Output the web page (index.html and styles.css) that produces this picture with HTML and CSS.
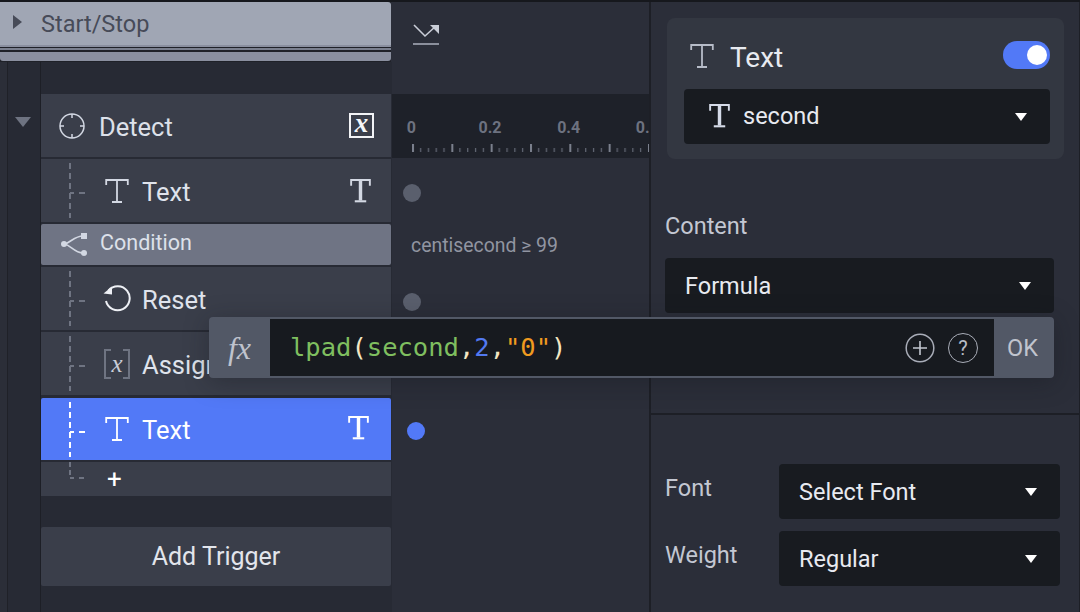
FILE: index.html
```html
<!DOCTYPE html>
<html lang="en">
<head>
<meta charset="utf-8">
<title>Trigger editor</title>
<link rel="stylesheet" href="styles.css">
</head>
<body>
<svg class="defs" width="0" height="0" aria-hidden="true">
  <symbol id="t-icon" viewBox="0 0 24 26">
    <path d="M1.2 7V2h21.6v5M12 2v22M7 24h10" fill="none" stroke="currentColor" stroke-width="1.8"/>
  </symbol>
  <symbol id="t-bold" viewBox="0 0 22 25">
    <path d="M1.2 7.5V1.5h19.6v6" fill="none" stroke="currentColor" stroke-width="2"/>
    <path d="M11 2v21" fill="none" stroke="currentColor" stroke-width="3.6"/>
    <path d="M5 23.8h12" fill="none" stroke="currentColor" stroke-width="2.2"/>
  </symbol>
  <symbol id="conn" viewBox="0 0 24 63">
    <path d="M4 4V59" stroke="currentColor" stroke-width="2" stroke-dasharray="6 4" fill="none"/>
    <path d="M4 34H8M13 34H19" stroke="currentColor" stroke-width="2" fill="none"/>
  </symbol>
</svg>
<div class="app">
  <section class="editor">
    <div class="tree-col">
      <div class="stack">
        <div class="stack-head">
          <span class="tri-right"></span>
          <span>Start/Stop</span>
        </div>
        <div class="stack-edge"></div>
        <div class="stack-thin"></div>
        <div class="stack-sheet"></div>
      </div>
      <div class="tree-body">
        <div class="rail"><span class="tri-down"></span></div>
        <div class="rows">
          <div class="row row-head">
            <svg class="ic-detect" width="26" height="26" viewBox="0 0 26 26"><g fill="none" stroke="#d3d8e3" stroke-width="1.5"><circle cx="13" cy="13" r="12"/><path d="M13 1v4M13 21v4M1 13h4M21 13h4"/></g></svg>
            <span class="row-title">Detect</span>
            <span class="var-box">x</span>
          </div>
          <div class="row">
            <svg class="conn"><use href="#conn"/></svg>
            <svg class="ic-main"><use href="#t-icon"/></svg>
            <span class="label">Text</span>
            <svg class="ic-end"><use href="#t-bold"/></svg>
          </div>
          <div class="row-cond">
            <svg class="ic-cond" width="28" height="24" viewBox="0 0 28 24"><g fill="#d3d8e3"><circle cx="4" cy="12" r="3"/><rect x="21" y="1" width="6" height="6"/><circle cx="24" cy="21" r="3"/></g><path d="M5 12C11 10 15 4 23 4M5 12C11 14 15 21 23 21" fill="none" stroke="#d3d8e3" stroke-width="1.6"/></svg>
            <span class="cond-label">Condition</span>
          </div>
          <div class="row">
            <svg class="conn"><use href="#conn"/></svg>
            <svg class="ic-reset" width="28" height="28" viewBox="0 0 28 28"><path d="M5.5 6.5A12 12 0 1 1 3 17" fill="none" stroke="#eef0f5" stroke-width="2"/><path d="M0.5 9.5L9 2.5V10.5Z" fill="#eef0f5"/></svg>
            <span class="label">Reset</span>
          </div>
          <div class="row">
            <svg class="conn"><use href="#conn"/></svg>
            <span class="ic-assign">x</span>
            <span class="label">Assign</span>
          </div>
          <div class="row row-active">
            <svg class="conn"><use href="#conn"/></svg>
            <svg class="ic-main"><use href="#t-icon"/></svg>
            <span class="label">Text</span>
            <svg class="ic-end"><use href="#t-bold"/></svg>
          </div>
          <div class="row-add">
            <svg class="conn-end" width="24" height="20" viewBox="0 0 24 20"><path d="M4 0V16H8M13 16H19" fill="none" stroke="#6f7482" stroke-width="2" stroke-dasharray="5 3"/></svg>
            <span class="plus">+</span>
          </div>
          <div class="add-trigger">Add Trigger</div>
        </div>
      </div>
    </div>
    <div class="time-col">
      <div class="time-top">
        <svg width="28" height="22" viewBox="0 0 28 22"><path d="M2 2L13 13L24 3" fill="none" stroke="#c9cdd7" stroke-width="1.6"/><path d="M18 2H27V11Z" fill="#c9cdd7"/><path d="M1 21H27" stroke="#8b8f9c" stroke-width="2"/></svg>
      </div>
      <div class="ruler">
        <div class="ruler-labels"><span>0</span><span>0.2</span><span>0.4</span><span>0.6</span></div>
        <svg class="ruler-ticks" width="258" height="9">
          <defs><pattern id="ticks" width="39.33" height="9" patternUnits="userSpaceOnUse"><rect x="0" y="0" width="2" height="8" fill="#7b808d"/><rect x="8" y="4" width="1.2" height="4" fill="#636875"/><rect x="15.8" y="4" width="1.2" height="4" fill="#636875"/><rect x="23.6" y="4" width="1.2" height="4" fill="#636875"/><rect x="31.4" y="4" width="1.2" height="4" fill="#636875"/></pattern></defs>
          <rect x="0" y="0" width="258" height="9" fill="url(#ticks)"/>
        </svg>
      </div>
      <div class="lane lane-a"><span class="dot"></span></div>
      <div class="lane-cond">centisecond ≥ 99</div>
      <div class="lane lane-b"><span class="dot"></span></div>
      <div class="lane lane-c"></div>
      <div class="lane lane-d"><span class="dot dot-blue"></span></div>
    </div>
  </section>

  <aside class="panel">
    <div class="card">
      <div class="card-head">
        <svg class="ic-card"><use href="#t-icon"/></svg>
        <span class="card-title">Text</span>
        <span class="toggle"><span class="knob"></span></span>
      </div>
      <div class="select select-card">
        <svg class="ic-select"><use href="#t-bold"/></svg>
        <span class="select-text">second</span>
        <span class="caret"></span>
      </div>
    </div>
    <div class="field-label">Content</div>
    <div class="select select-content">
      <span class="select-text">Formula</span>
      <span class="caret"></span>
    </div>
    <div class="divider"></div>
    <div class="form-row form-row-first">
      <span class="form-label">Font</span>
      <div class="select select-form"><span class="select-text">Select Font</span><span class="caret"></span></div>
    </div>
    <div class="form-row">
      <span class="form-label">Weight</span>
      <div class="select select-form"><span class="select-text">Regular</span><span class="caret"></span></div>
    </div>
  </aside>

  <div class="formula">
    <span class="fx">fx</span>
    <div class="code-wrap">
      <code class="code"><span class="c-fn">lpad</span><span class="c-p">(</span><span class="c-fn">second</span><span class="c-p">,</span><span class="c-num">2</span><span class="c-p">,</span><span class="c-str">"0"</span><span class="c-p">)</span></code>
      <svg class="round-btn" width="30" height="30" viewBox="0 0 30 30"><circle cx="15" cy="15" r="13.8" fill="none" stroke="#a9adb8" stroke-width="1.5"/><path d="M15 8v14M8 15h14" stroke="#c2c6cf" stroke-width="1.6"/></svg>
      <span class="help">?</span>
    </div>
    <span class="ok">OK</span>
  </div>
</div>
</body>
</html>
```

FILE: styles.css
```css
* { box-sizing: border-box; }
html, body { margin: 0; padding: 0; height: 100%; overflow: hidden; background: #2b2e39; }
body { font-family: Roboto, "Liberation Sans", sans-serif; color: #e4e7ee; }
.defs { position: absolute; }

.app { position: relative; display: flex; width: 1080px; height: 612px; border-top: 2px solid #16181d; background: #2b2e39; overflow: hidden; }

/* left editor */
.editor { display: flex; width: 651px; flex: none; border-right: 2px solid #1d1f26; }
.tree-col { width: 392px; flex: none; display: flex; flex-direction: column; }
.stack { height: 60px; flex: none; background: #1f2128; display: flex; flex-direction: column; margin-right: 1px; }
.stack-head { height: 43px; flex: none; background: #a0a6b4; border-radius: 0 3px 0 0; display: flex; align-items: center; color: #474b58; font-size: 23.5px; padding-left: 13px; }
.tri-right { width: 0; height: 0; border-left: 9px solid #474b58; border-top: 7px solid transparent; border-bottom: 7px solid transparent; margin-right: 19px; margin-top: -4px; }
.stack-edge { height: 2px; flex: none; background: #8a8f9f; }
.stack-thin { height: 2px; flex: none; margin-top: 1px; background: #7a7f8e; }
.stack-sheet { height: 9px; flex: none; margin-top: 2px; background: #8a8f9f; border-radius: 0 0 3px 3px; }

.tree-body { flex: 1; display: flex; min-height: 0; background: #272a34; }
.rail { width: 41px; flex: none; background: linear-gradient(90deg, #2b2e38 0 7px, #1f2128 7px 8px, #272a34 8px 39.5px, #1d1f26 39.5px 41px); padding: 55px 0 0 15px; }
.tri-down { display: block; width: 0; height: 0; border-top: 10px solid #6e7381; border-left: 8px solid transparent; border-right: 8px solid transparent; }
.rows { flex: 1; padding: 32px 0 0; margin-right: 1px; display: flex; flex-direction: column; min-width: 0; }

.row { height: 63px; flex: none; margin-bottom: 2px; background: #3a3e4a; display: flex; align-items: center; padding-left: 25px; color: #6f7482; }
.row-head { margin-bottom: 2px; padding-left: 18px; }
.row-title { font-size: 25.5px; color: #dde1ea; margin-left: 14px; margin-top: 2px; }
.var-box { width: 25px; height: 25px; border: 2px solid #f2f3f6; margin-left: auto; margin-right: 17px; display: flex; align-items: center; justify-content: center; font: italic bold 27px/1 "Liberation Serif", serif; color: #f5f6f8; padding-bottom: 5px; }
.conn { width: 24px; height: 63px; flex: none; color: #6f7482; }
.ic-main { width: 24px; height: 26px; margin-left: 15px; color: #d3d8e3; flex: none; }
.label { font-size: 25.5px; color: #dfe3ec; margin-left: 13px; margin-top: 2px; }
.ic-end { width: 21px; height: 25px; margin-left: auto; margin-right: 20px; color: #d3d8e3; flex: none; }
.ic-reset { margin-left: 13px; margin-right: -2px; margin-top: -2px; flex: none; }
.ic-assign { width: 26px; height: 26px; margin-left: 14px; margin-right: -1px; flex: none; display: flex; align-items: center; justify-content: space-between; font: italic 25px/26px "Liberation Serif", serif; color: #c8ccd6; }
.ic-assign::before, .ic-assign::after { content: ""; width: 6px; height: 26px; border: 2px solid #6f7482; }
.ic-assign::before { border-right: 0; }
.ic-assign::after { border-left: 0; }
.row-cond { height: 41px; flex: none; margin-bottom: 2px; background: #6f7484; border-radius: 2px; display: flex; align-items: center; padding-left: 19px; }
.cond-label { font-size: 21.5px; color: #dde1ea; margin-left: 12px; margin-top: -4px; }
.ic-cond { margin-top: -2px; flex: none; }
.row-active { height: 62px; background: #5279f7; margin-top: 1px; color: #f5f6fa; margin-bottom: 2px; border-radius: 2px 2px 0 0; }
.row-active .conn, .row-active .ic-main, .row-active .ic-end, .row-active .label { color: #fff; }
.row-active .ic-end { margin-right: 22px; margin-top: -4px; }
.row-add { height: 34px; flex: none; background: #3a3e4a; display: flex; padding-left: 25px; align-items: flex-start; }
.conn-end { flex: none; }
.plus { font-size: 26px; line-height: 34px; color: #fff; margin-left: 17px; }
.add-trigger { height: 59px; flex: none; margin-top: 31px; background: #3a3e4a; border-radius: 2px; display: flex; align-items: center; justify-content: center; font-size: 25px; color: #e2e5ec; }

/* timeline */
.time-col { flex: 1; min-width: 0; display: flex; flex-direction: column; overflow: hidden; }
.time-top { height: 92px; flex: none; padding: 21px 0 0 20px; }
.ruler { height: 64px; flex: none; background: #1e2129; padding-top: 20px; overflow: hidden; }
.ruler-labels { display: flex; margin-left: -20px; font-size: 16px; font-weight: 700; color: #6d7280; height: 30px; line-height: 28px; }
.ruler-labels span { width: 78.66px; flex: none; text-align: center; }
.ruler-ticks { display: block; margin-left: 20px; margin-top: 0; }
.lane { flex: none; display: flex; align-items: center; padding-left: 11px; padding-bottom: 2px; }
.lane-a { height: 72px; }
.lane-b { height: 62px; }
.lane-c { height: 64px; }
.lane-d { height: 68px; }
.dot { width: 18px; height: 18px; border-radius: 50%; background: #5a5f6d; }
.dot-blue { background: #5279f7; margin-left: 4px; }
.lane-cond { height: 42px; flex: none; padding-left: 19px; font-size: 19.4px; line-height: 32px; color: #9195a1; }

/* right panel */
.panel { flex: 1; min-width: 0; padding: 16px 0 0 14px; border-right: 1px solid #1d1f26; position: relative; }
.card { width: 397px; height: 141px; margin-left: 2px; background: #333741; border-radius: 8px; padding: 24px 14px 0 17px; }
.card-head { display: flex; align-items: center; height: 30px; padding-left: 6px; }
.ic-card { width: 24px; height: 26px; color: #b7bcc8; flex: none; margin-top: -2px; }
.card-title { font-size: 28px; margin-left: 16px; color: #e8eaf0; margin-top: 1px; }
.toggle { margin-left: auto; width: 47px; height: 28px; margin-top: -4px; border-radius: 14px; background: #5279f7; display: flex; align-items: center; justify-content: flex-end; padding-right: 3px; }
.knob { width: 20px; height: 20px; border-radius: 50%; background: #fff; }
.select { background: #181b20; border-radius: 4px; display: flex; align-items: center; padding-left: 20px; padding-right: 23px; }
.select-card { height: 55px; margin-top: 17px; }
.ic-select { width: 21px; height: 25px; color: #d5dbe8; margin-left: 5px; flex: none; margin-right: 13px; margin-bottom: 2px; }
.select-card .select-text { margin-bottom: 2px; }
.select-text { font-size: 23.5px; color: #e8eaf0; }
.caret { margin-left: auto; width: 0; height: 0; border-top: 8px solid #fff; border-left: 6px solid transparent; border-right: 6px solid transparent; }
.field-label { font-size: 23.5px; color: #c3c7d2; margin-top: 52px; height: 47px; line-height: 30px; }
.select-content { width: 389px; height: 55px; }
.divider { margin: 100px 0 0 -14px; height: 2px; background: #1d1f26; width: 430px; }
.form-row { display: flex; align-items: center; margin-top: 12px; width: 395px; }
.form-row-first { margin-top: 49px; }
.form-label { width: 114px; flex: none; font-size: 23.5px; color: #c3c7d2; margin-top: -7px; }
.select-form { flex: 1; height: 55px; }

/* formula overlay */
.formula { position: absolute; left: 209px; top: 315px; width: 845px; height: 61px; background: #525866; border-radius: 4px; display: flex; box-shadow: 0 4px 24px rgba(20,22,28,.35); }
.fx { width: 61px; flex: none; display: flex; align-items: center; justify-content: center; font: italic 32px/1 "Liberation Serif", serif; color: #bfc3cd; }
.code-wrap { flex: 1; min-width: 0; margin: 2px 0; background: #171a1f; display: flex; align-items: center; padding: 0 16px 0 20px; }
.code { font: 25.5px/1 "DejaVu Sans Mono", monospace; }
.c-fn { color: #7fbf5f; }
.c-p { color: #f3e6c3; }
.c-num { color: #5279f0; }
.c-str { color: #f09a1f; }
.round-btn { margin-left: auto; flex: none; }
.help { width: 30px; height: 30px; margin-left: 13px; border: 1.5px solid #a9adb8; border-radius: 50%; display: flex; align-items: center; justify-content: center; font-size: 20px; color: #b8bcc6; flex: none; }
.ok { width: 60px; flex: none; display: flex; align-items: center; justify-content: center; font-size: 23.5px; color: #c0c4ce; padding-right: 3px; }
```
